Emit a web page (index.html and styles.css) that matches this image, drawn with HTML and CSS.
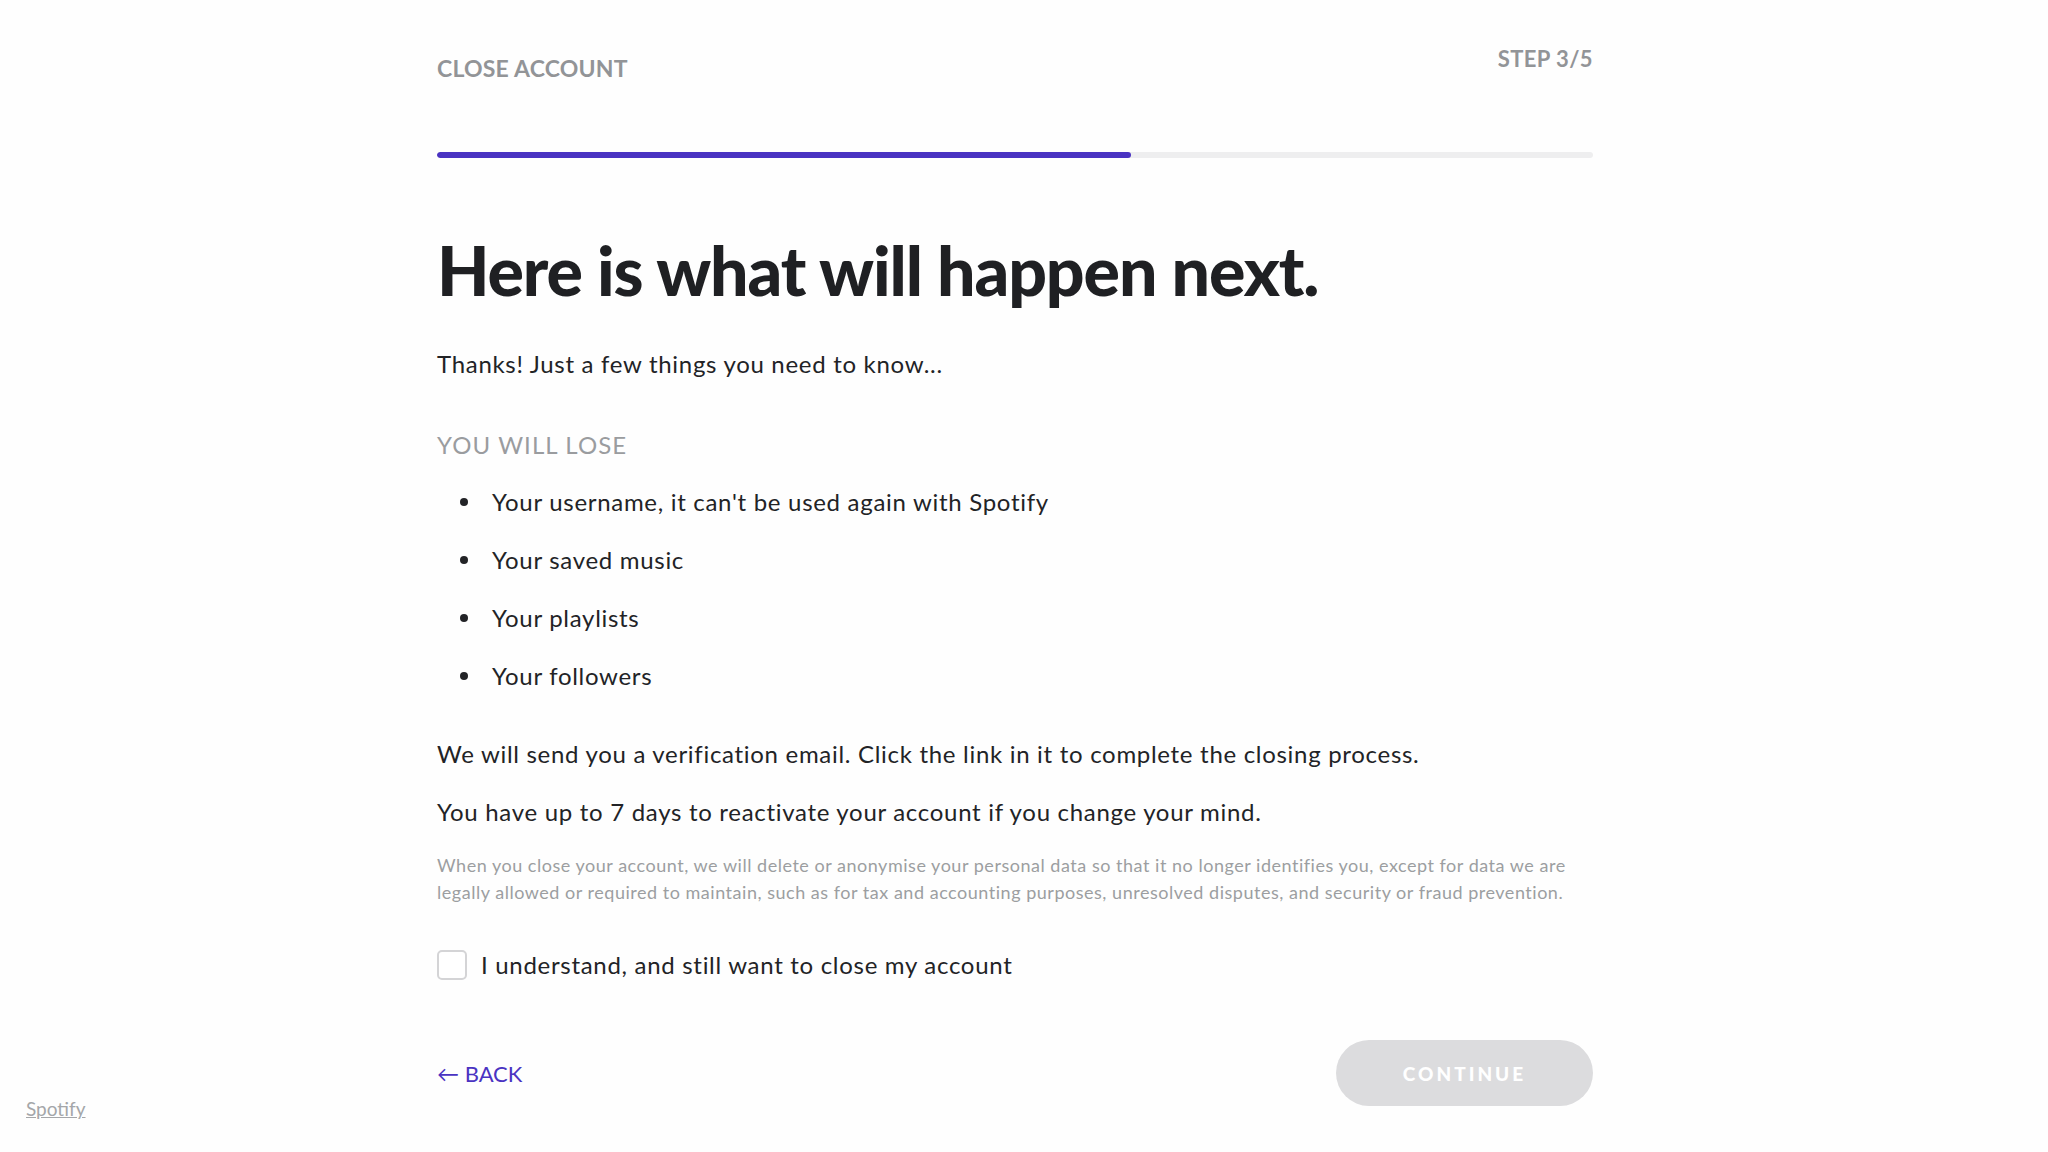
FILE: index.html
```html
<!DOCTYPE html>
<html lang="en">
<head>
<meta charset="utf-8">
<title>Close account</title>
<link rel="stylesheet" href="styles.css">
</head>
<body>
<main class="page">
  <header class="top">
    <div class="eyebrow">CLOSE ACCOUNT</div>
    <div class="step">STEP 3/5</div>
  </header>
  <div class="progress"><div class="progress-fill" style="width: 60%"></div></div>

  <h1 class="title">Here is what will happen next.</h1>
  <p class="intro">Thanks! Just a few things you need to know...</p>

  <h2 class="section">YOU WILL LOSE</h2>
  <ul class="losses">
    <li>Your username, it can't be used again with Spotify</li>
    <li>Your saved music</li>
    <li>Your playlists</li>
    <li>Your followers</li>
  </ul>

  <p class="body">We will send you a verification email. Click the link in it to complete the closing process.</p>
  <p class="body">You have up to 7 days to reactivate your account if you change your mind.</p>

  <p class="fine">When you close your account, we will delete or anonymise your personal data so that it no longer identifies you, except for data we are legally allowed or required to maintain, such as for tax and accounting purposes, unresolved disputes, and security or fraud prevention.</p>

  <label class="confirm">
    <span class="box"></span>
    <span>I understand, and still want to close my account</span>
  </label>

  <div class="actions">
    <a class="back" href="#">&larr; BACK</a>
    <button class="continue" type="button">CONTINUE</button>
  </div>
</main>
<footer class="footer"><a href="#">Spotify</a></footer>
</body>
</html>
```

FILE: styles.css
```css
* { box-sizing: border-box; }
html, body { margin: 0; padding: 0; background: #fefefe; }
body {
  font-family: "Lato", "Liberation Sans", sans-serif;
  color: #222326;
  width: 2048px;
  height: 1152px;
  position: relative;
  overflow: hidden;
}
.page {
  width: 1156px;
  margin-left: 437px;
  padding-top: 47px;
}
.top {
  display: flex;
  justify-content: space-between;
  align-items: flex-start;
}
.eyebrow {
  margin-top: 9px;
  font-size: 23px;
  line-height: 24px;
  font-weight: 700;
  color: #929497;
  letter-spacing: 0.2px;
}
.step {
  font-size: 22px;
  line-height: 24px;
  font-weight: 700;
  color: #929497;
  letter-spacing: 0.4px;
}
.progress {
  margin-top: 72px;
  height: 6px;
  background: #eeeeef;
  border-radius: 3px;
  overflow: hidden;
}
.progress-fill {
  height: 100%;
  background: #4a33c2;
  border-radius: 3px;
}
.title {
  margin: 72px 0 0;
  font-size: 68px;
  line-height: 80px;
  font-weight: 900;
  letter-spacing: -1.1px;
  color: #1f2023;
}
.intro {
  margin: 39px 0 0;
  font-size: 24px;
  line-height: 30px;
  letter-spacing: 0.7px;
}
.section {
  margin: 51px 0 0;
  font-size: 24px;
  line-height: 30px;
  font-weight: 400;
  color: #9a9c9f;
  letter-spacing: 1.1px;
}
.losses {
  list-style: none;
  margin: 27px 0 0;
  padding: 0 0 0 55px;
}
.losses li {
  position: relative;
  font-size: 24px;
  line-height: 30px;
  letter-spacing: 0.7px;
  margin-bottom: 28px;
}
.losses li::before {
  content: "";
  position: absolute;
  left: -32px;
  top: 11px;
  width: 8px;
  height: 8px;
  border-radius: 50%;
  background: #222326;
}
.body {
  margin: 48px 0 0;
  font-size: 24px;
  line-height: 30px;
  letter-spacing: 0.7px;
}
.body + .body { margin-top: 28px; }
.fine {
  margin: 25px 0 0;
  font-size: 18px;
  line-height: 27px;
  color: #9c9ea1;
  letter-spacing: 0.52px;
}
.confirm {
  margin-top: 44px;
  display: flex;
  align-items: center;
  gap: 14px;
  font-size: 24px;
  line-height: 30px;
  letter-spacing: 0.7px;
}
.box {
  width: 30px;
  height: 30px;
  border: 2px solid #d4d4d6;
  border-radius: 5px;
  background: #fff;
}
.actions {
  margin-top: 60px;
  display: flex;
  justify-content: space-between;
  align-items: center;
}
.back {
  color: #4a33c2;
  text-decoration: none;
  font-size: 22px;
  font-weight: 400;
}
.continue {
  width: 257px;
  height: 66px;
  border: none;
  border-radius: 33px;
  background: #dcdcde;
  color: #ffffff;
  font-family: "Lato", "Liberation Sans", sans-serif;
  font-size: 19px;
  font-weight: 900;
  letter-spacing: 3px;
}
.footer {
  position: absolute;
  left: 26px;
  top: 1097px;
}
.footer a {
  color: #a4a6a9;
  font-size: 19px;
  text-decoration: underline;
}
```
